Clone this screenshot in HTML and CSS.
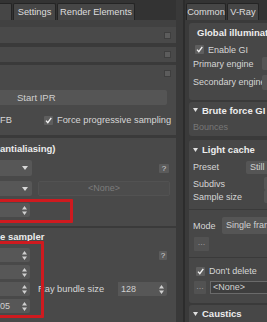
FILE: index.html
```html
<!DOCTYPE html>
<html lang="en">
<head>
    <meta charset="UTF-8">
    <meta name="viewport" content="width=device-width, initial-scale=1.0">
    <title>Render Setup: V-Ray</title>
    <link rel="stylesheet" href="styles.css">
</head>
<body>
    <div class="screen">
        <!-- left: render settings column -->
        <div class="pane pane-left">
            <div class="tabbar">
                <span class="tab tab-stub"></span>
                <span class="tab tab-settings">Settings</span>
                <span class="tab tab-elements">Render Elements</span>
            </div>
            <div class="strip"></div>

            <div class="rollout closed r1"><span class="grip"></span></div>
            <div class="rollout closed r2"><span class="grip"></span></div>

            <div class="rollout r3">
                <div class="rollout-head h3"><span class="grip"></span></div>
                <div class="btn-wide">Start IPR</div>
                <div class="row row-ipr">
                    <span class="cut-label">FB</span>
                    <svg class="check" viewBox="0 0 9 9"><rect width="9" height="9" rx="1" fill="#5e5e5e"/><path d="M2 4.6 L3.8 6.6 L7.3 1.8" fill="none" stroke="#f2f2f2" stroke-width="1.4"/></svg>
                    <span>Force progressive sampling</span>
                </div>
            </div>

            <div class="rollout r4">
                <div class="rollout-head title">antialiasing)</div>
                <div class="row row-aa1">
                    <div class="field drop"><svg class="drop-arrow" viewBox="0 0 6 4"><path d="M0 0 H6 L3 4 Z" fill="#d8d8d8"/></svg></div>
                    <span class="help">?</span>
                </div>
                <div class="row row-aa2">
                    <div class="field drop"><svg class="drop-arrow" viewBox="0 0 6 4"><path d="M0 0 H6 L3 4 Z" fill="#d8d8d8"/></svg></div>
                    <div class="none-box">&lt;None&gt;</div>
                </div>
                <div class="row row-aa3">
                    <div class="field spin"><svg class="spin-arrows" viewBox="0 0 5 9"><path d="M0 3.5 L2.5 0 L5 3.5 Z M0 5.5 L2.5 9 L5 5.5 Z" fill="#cfcfcf"/></svg></div>
                </div>
            </div>

            <div class="rollout r5">
                <div class="rollout-head title">e sampler</div>
                <div class="row row-bs">
                    <div class="field spin"><svg class="spin-arrows" viewBox="0 0 5 9"><path d="M0 3.5 L2.5 0 L5 3.5 Z M0 5.5 L2.5 9 L5 5.5 Z" fill="#cfcfcf"/></svg></div>
                    <span class="help help-low">?</span>
                </div>
                <div class="row row-bs">
                    <div class="field spin"><svg class="spin-arrows" viewBox="0 0 5 9"><path d="M0 3.5 L2.5 0 L5 3.5 Z M0 5.5 L2.5 9 L5 5.5 Z" fill="#cfcfcf"/></svg></div>
                </div>
                <div class="row row-bs">
                    <div class="field spin"><svg class="spin-arrows" viewBox="0 0 5 9"><path d="M0 3.5 L2.5 0 L5 3.5 Z M0 5.5 L2.5 9 L5 5.5 Z" fill="#cfcfcf"/></svg></div>
                    <span class="ray-label">Ray bundle size</span>
                    <div class="field spin field-ray">128<svg class="spin-arrows" viewBox="0 0 5 9"><path d="M0 3.5 L2.5 0 L5 3.5 Z M0 5.5 L2.5 9 L5 5.5 Z" fill="#cfcfcf"/></svg></div>
                </div>
                <div class="row row-bs">
                    <div class="field spin">05<svg class="spin-arrows" viewBox="0 0 5 9"><path d="M0 3.5 L2.5 0 L5 3.5 Z M0 5.5 L2.5 9 L5 5.5 Z" fill="#cfcfcf"/></svg></div>
                </div>
            </div>
        </div>

        <div class="divider"></div>

        <!-- right: V-Ray tab -->
        <div class="pane pane-right">
            <div class="tabbar">
                <span class="tab tab-common">Common</span>
                <span class="tab tab-vray">V-Ray</span>
            </div>

            <div class="rollout side gi">
                <div class="side-head"><svg class="bullet" viewBox="0 0 5 4"><path d="M0 0 H5 L2.5 4 Z" fill="#e0e0e0"/></svg>Global illumination</div>
                <div class="line line-enable">
                    <svg class="check" viewBox="0 0 9 9"><rect width="9" height="9" rx="1" fill="#5e5e5e"/><path d="M2 4.6 L3.8 6.6 L7.3 1.8" fill="none" stroke="#f2f2f2" stroke-width="1.4"/></svg>
                    <span>Enable GI</span>
                </div>
                <div class="line line-primary"><span class="lbl lbl-engine">Primary engine</span><span class="box"></span></div>
                <div class="line line-secondary"><span class="lbl lbl-engine">Secondary engine</span><span class="box"></span></div>
            </div>

            <div class="rollout side bf">
                <div class="side-head"><svg class="bullet" viewBox="0 0 5 4"><path d="M0 0 H5 L2.5 4 Z" fill="#e0e0e0"/></svg>Brute force GI</div>
                <div class="line line-bounces"><span class="lbl muted">Bounces</span></div>
            </div>

            <div class="rollout side lc">
                <div class="side-head"><svg class="bullet" viewBox="0 0 5 4"><path d="M0 0 H5 L2.5 4 Z" fill="#e0e0e0"/></svg>Light cache</div>
                <div class="line line-preset"><span class="lbl lbl-preset">Preset</span><span class="box box-text">Still</span></div>
                <div class="line line-small"><span class="lbl lbl-sub">Subdivs</span><span class="box"></span></div>
                <div class="line line-small"><span class="lbl lbl-sub">Sample size</span><span class="box"></span></div>
                <div class="sep"></div>
                <div class="line line-mode"><span class="lbl lbl-mode">Mode</span><span class="box box-text box-mode">Single frame</span></div>
                <div class="line line-dots"><span class="dots dots-wide">...</span></div>
                <div class="sep sep-2"></div>
                <div class="line line-dont">
                    <svg class="check" viewBox="0 0 9 9"><rect width="9" height="9" rx="1" fill="#5e5e5e"/><path d="M2 4.6 L3.8 6.6 L7.3 1.8" fill="none" stroke="#f2f2f2" stroke-width="1.4"/></svg>
                    <span>Don't delete</span>
                </div>
                <div class="line line-file"><span class="dots">...</span><span class="file-box">&lt;None&gt;</span></div>
            </div>

            <div class="rollout side caustics">
                <div class="side-head"><svg class="bullet" viewBox="0 0 5 4"><path d="M0 0 H5 L2.5 4 Z" fill="#e0e0e0"/></svg>Caustics</div>
            </div>
        </div>

        <!-- red annotation frames drawn over the screenshot -->
        <div class="mark mark-a"></div>
        <div class="mark mark-b"></div>
    </div>
</body>
</html>
```

FILE: styles.css
```css
body {
    margin: 0;
    background: #3a3a3a;
    font-family: "Liberation Sans", Arial, sans-serif;
    font-size: 9px;
    color: #d6d6d6;
}

.screen {
    position: relative;
    display: flex;
    width: 267px;
    height: 322px;
    overflow: hidden;
    background: #3a3a3a;
}

.pane {
    display: flex;
    flex-direction: column;
    overflow: hidden;
}

.pane-left {
    width: 176px;
    flex-shrink: 0;
}

.divider {
    width: 9px;
    flex-shrink: 0;
    background: #393939;
    border-right: 2px solid #2c2c2c;
    box-sizing: border-box;
}

.pane-right {
    width: 82px;
    flex-shrink: 0;
}

/* tabs */
.tabbar {
    height: 20px;
    flex-shrink: 0;
    display: flex;
    align-items: flex-end;
    background: #333333;
}

.tab {
    height: 17px;
    box-sizing: border-box;
    margin-left: 1px;
    padding-top: 3px;
    background: #464646;
    border: 1px solid #242424;
    border-bottom: none;
    border-radius: 2px 2px 0 0;
    text-align: center;
    color: #dedede;
    font-size: 9.3px;
    white-space: nowrap;
}

.tab-stub {
    width: 12px;
    margin-left: 0;
    border-left: none;
    border-radius: 0 2px 0 0;
}

.tab-settings { width: 43px; }
.tab-elements { width: 78px; }
.tab-common { width: 40px; }
.tab-vray { width: 32px; }

.strip {
    height: 7px;
    flex-shrink: 0;
    background: #414141;
}

/* left rollouts */
.rollout {
    flex-shrink: 0;
    background: #494949;
}

.closed {
    display: flex;
    align-items: center;
    justify-content: flex-end;
    padding-right: 5px;
}

.r1 { height: 16px; margin-bottom: 4px; }
.r2 { height: 15px; margin-bottom: 3px; }
.r3 { height: 70px; margin-bottom: 3px; }
.r4 { height: 88px; margin-bottom: 2px; }
.r5 { height: 100px; }

.grip {
    width: 5px;
    height: 5px;
    background: #5c5c5c;
    border: 1px solid #3e3e3e;
}

.rollout-head {
    display: flex;
    align-items: center;
}

.h3 {
    height: 17px;
    justify-content: flex-end;
    padding-right: 5px;
}

.title {
    height: 20px;
    font-weight: bold;
    font-size: 9.5px;
    color: #ececec;
}

.r5 .title { height: 17px; }

.btn-wide {
    width: 167px;
    height: 15px;
    margin-top: 8px;
    box-sizing: border-box;
    padding: 2px 0 0 17px;
    background: #555555;
    border-radius: 0 2px 2px 0;
    color: #cfcfcf;
    font-size: 9.5px;
}

.row {
    display: flex;
    align-items: center;
}

.row-ipr {
    height: 16px;
    margin-top: 7px;
    font-size: 9.3px;
}

.cut-label { width: 44px; }

.check {
    width: 9px;
    height: 9px;
    margin-right: 4px;
    flex-shrink: 0;
}

.field {
    position: relative;
    box-sizing: border-box;
    background: #575757;
    border-radius: 0 2px 2px 0;
    color: #d0d0d0;
    display: flex;
    align-items: center;
}

.drop { width: 32px; height: 100%; }
.spin { width: 30px; height: 14px; }

.drop-arrow {
    width: 6px;
    height: 4px;
    margin-left: 22px;
}

.spin-arrows {
    width: 5px;
    height: 9px;
    margin-left: auto;
    margin-right: 3px;
}

.row-aa1 { height: 16px; margin-top: 2px; }
.row-aa2 { height: 15px; margin-top: 5px; }
.row-aa3 { height: 14px; margin-top: 7px; }

.help {
    margin-left: auto;
    margin-right: 7px;
    width: 10px;
    height: 9px;
    line-height: 9px;
    background: #5b5b5b;
    border-radius: 1px;
    text-align: center;
    font-size: 8px;
    color: #d8d8d8;
}

.help-low { width: 8px; margin-right: 9px; }

.none-box {
    width: 132px;
    height: 100%;
    margin-left: 6px;
    box-sizing: border-box;
    background: #4c4c4c;
    border: 1px solid #525252;
    border-radius: 2px;
    text-align: center;
    line-height: 13px;
    color: #7c7c7c;
}

.row-bs { height: 14px; margin-top: 3px; }

.ray-label {
    margin-left: 8px;
    width: 80px;
    font-size: 9.3px;
}

.field-ray {
    width: 49px;
    padding-left: 3px;
}

/* right rollouts */
.side {
    width: 90px;
    margin-left: 4px;
    border-radius: 3px 0 0 3px;
    background: #474747;
}

.gi { height: 77px; margin-top: 3px; }
.bf { height: 34px; margin-top: 2px; }
.lc { height: 163px; margin-top: 4px; }
.caustics { height: 20px; margin-top: 2px; }

.side-head {
    display: flex;
    align-items: center;
    height: 19px;
    padding-left: 4px;
    font-weight: bold;
    font-size: 9.5px;
    color: #ededed;
    white-space: nowrap;
}

.bf .side-head { height: 16px; }
.caustics .side-head { height: 17px; }

.bullet {
    width: 5px;
    height: 4px;
    margin-right: 4px;
}

.line {
    display: flex;
    align-items: center;
    padding-left: 4px;
    white-space: nowrap;
}

.lbl { flex-shrink: 0; }
.lbl-engine { width: 69px; }
.lbl-preset { width: 53px; }
.lbl-sub { width: 71px; }
.lbl-mode { width: 29px; }

.muted { color: #777777; }

.box {
    width: 30px;
    height: 13px;
    background: #555555;
    border-radius: 2px;
    flex-shrink: 0;
}

.box-text {
    box-sizing: border-box;
    padding-left: 4px;
    line-height: 13px;
    color: #d0d0d0;
}

.line-enable { height: 15px; padding-left: 6px; }
.line-primary { height: 13px; }
.line-secondary { height: 16px; margin-top: 4px; }
.line-secondary .box { height: 15px; }
.line-bounces { height: 14px; margin-top: 2px; }

.line-preset { height: 14px; margin-top: 1px; }
.line-small { height: 13px; }
.line-small:first-of-type { margin-top: 3px; }
.line-preset + .line-small { margin-top: 3px; }

.sep {
    height: 1px;
    margin-top: 6px;
    background: #3a3a3a;
}

.line-mode { height: 17px; margin-top: 7px; }
.box-mode { width: 60px; height: 17px; line-height: 17px; }

.line-dots { height: 14px; margin-top: 3px; }
.sep-2 { margin-top: 6px; }

.dots {
    width: 12px;
    height: 13px;
    margin-left: 1px;
    background: #525252;
    border-radius: 1px;
    text-align: center;
    line-height: 10px;
    color: #9a9a9a;
    flex-shrink: 0;
}

.dots-wide { width: 15px; height: 14px; }

.line-dont { height: 16px; margin-top: 5px; padding-left: 7px; }
.line-file { height: 13px; margin-top: 2px; }

.file-box {
    width: 60px;
    height: 13px;
    margin-left: 4px;
    box-sizing: border-box;
    padding-left: 2px;
    background: #3e3e3e;
    border: 1px solid #6a6a6a;
    line-height: 11px;
    color: #d2d2d2;
    flex-shrink: 0;
}

/* annotation frames */
.mark {
    position: absolute;
    box-sizing: border-box;
    border: 3px solid #cf1a1f;
    border-radius: 1px;
}

.mark-a {
    left: -4px;
    top: 199px;
    width: 77px;
    height: 24px;
}

.mark-b {
    left: -4px;
    top: 241px;
    width: 48px;
    height: 77px;
}
```
